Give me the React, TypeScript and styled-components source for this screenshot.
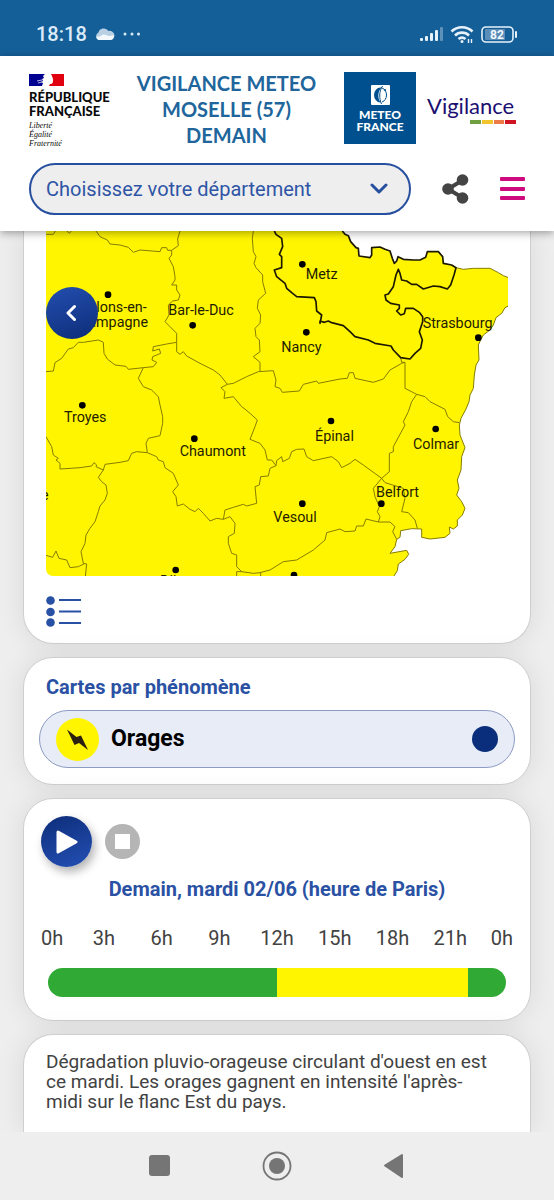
import React from "react";
import styled, { createGlobalStyle, css } from "styled-components";

const GlobalStyle = createGlobalStyle`
  * { box-sizing: border-box; }
  body { margin: 0; background: #eeeeee; font-family: Roboto, "Liberation Sans", sans-serif; font-size: 20px; color: #424242; }
  button { padding: 0; border: 0; background: none; font: inherit; cursor: pointer; }
  svg { display: block; }
`;

const Page = styled.div`
  min-height: 100vh;
  display: flex;
  flex-direction: column;
`;

/* ---------- status bar ---------- */

const StatusBar = styled.div`
  display: flex;
  align-items: center;
  gap: 8px;
  height: 56px;
  padding: 12px 36px 0;
  background: #155f98;
  color: #dcebf8;
`;

const Clock = styled.time`
  font-size: 20px;
  line-height: 24px;
  font-weight: 500;
`;

const StatusRight = styled.div`
  display: flex;
  align-items: center;
  gap: 6px;
  margin-left: auto;
`;

/* ---------- header ---------- */

const Header = styled.header`
  position: relative;
  z-index: 2;
  padding: 14px 29px 16px;
  background: #ffffff;
  box-shadow: 0 2px 8px rgba(0, 0, 0, 0.35);
`;

const Brand = styled.div`
  display: flex;
  height: 93px;
`;

const Republic = styled.div`
  width: 80px;
  padding-top: 4px;
  color: #0a0a0a;
`;

const RepublicName = styled.div`
  margin-top: 4px;
  font: 900 13px/14px Lato, sans-serif;
  white-space: nowrap;
`;

const Motto = styled.div`
  margin-top: 3px;
  font: italic 8px/9px "Liberation Serif", serif;
`;

const Title = styled.h1`
  flex: 1;
  margin: 0;
  text-align: center;
  white-space: pre-line;
  font: 700 20px/26px Lato, sans-serif;
  color: #20659b;
`;

const MeteoFrance = styled.div`
  display: flex;
  flex-direction: column;
  align-items: center;
  width: 72px;
  height: 72px;
  margin-top: 2px;
  padding-top: 13px;
  background: #00508f;
  color: #ffffff;
  text-align: center;
  font: 900 12px/12px Lato, sans-serif;
`;

const MeteoName = styled.div`
  margin-top: 4px;
`;

const VigilanceLogo = styled.div`
  display: flex;
  flex-direction: column;
  width: 89px;
  margin: 22px 9px 0 11px;
  color: #1b0f70;
  font: 400 22px/28px Lato, sans-serif;
`;

const Levels = styled.div`
  display: flex;
  gap: 1px;
  width: 46px;
  margin-left: auto;
`;

const Level = styled.span<{ $color: string }>`
  flex: 1;
  height: 4px;
  background: ${(p) => p.$color};
`;

const Tools = styled.div`
  display: flex;
  align-items: center;
  gap: 31px;
`;

const SelectWrap = styled.div`
  position: relative;
  flex: 1;
  display: flex;
`;

const Department = styled.select`
  appearance: none;
  width: 100%;
  height: 52px;
  padding: 0 48px 0 15px;
  border: 2px solid #274f9f;
  border-radius: 26px;
  background: #eeeeee;
  color: #2f55a6;
  font: 400 20px/24px Roboto, sans-serif;
`;

const Chevron = styled.svg`
  position: absolute;
  right: 23px;
  top: 19px;
  pointer-events: none;
`;

/* ---------- cards ---------- */

const Main = styled.main`
  flex: 1;
  display: flex;
  flex-direction: column;
  gap: 13px;
  padding: 0 23px;
  overflow: hidden;
`;

type Place = "top" | "middle" | "bottom";

const Card = styled.section<{ $place?: Place; $pad: string }>`
  padding: ${(p) => p.$pad};
  border: 1px solid #cfcfcf;
  border-radius: 30px;
  background: #ffffff;
  box-shadow: 0 0 28px rgba(0, 0, 0, 0.09);
  ${(p) => p.$place === "top" && css`border-top: 0; border-top-left-radius: 0; border-top-right-radius: 0;`}
  ${(p) => p.$place === "bottom" && css`flex: 1; border-bottom: 0; border-bottom-left-radius: 0; border-bottom-right-radius: 0;`}
`;

const MapFrame = styled.div`
  position: relative;
  overflow: hidden;
  border-radius: 0 0 7px 7px;
`;

const MapSvg = styled.svg`
  width: 100%;
  height: auto;
  font-family: Roboto, sans-serif;
`;

const Previous = styled.button`
  position: absolute;
  left: 0;
  top: 56px;
  width: 52px;
  height: 52px;
  border-radius: 50%;
  background: linear-gradient(160deg, #234fb0, #0d2c78);
  display: grid;
  place-items: center;
`;

const LegendButton = styled.button`
  display: block;
  margin-top: 20px;
`;

const CardTitle = styled.h2<{ $center?: boolean }>`
  margin: ${(p) => (p.$center ? "10px 0 0" : "0 7px")};
  text-align: ${(p) => (p.$center ? "center" : "left")};
  font-size: 20px;
  line-height: 24px;
  font-weight: 700;
  color: #2a51a3;
`;

const Phenomenon = styled.label`
  display: flex;
  align-items: center;
  gap: 12px;
  height: 58px;
  margin-top: 11px;
  padding: 0 16px;
  border: 1px solid #8c9bc2;
  border-radius: 29px;
  background: #e7ecf7;
  color: #000000;
  font-size: 23px;
  line-height: 28px;
  font-weight: 700;
`;

const PhenomenonRadio = styled.input`
  appearance: none;
  width: 26px;
  height: 26px;
  margin: 0 0 0 auto;
  border-radius: 50%;
  background: #0b2e7c;
`;

const Controls = styled.div`
  display: flex;
  align-items: center;
  gap: 13px;
`;

const Play = styled.button`
  display: grid;
  place-items: center;
  width: 51px;
  height: 51px;
  border-radius: 50%;
  background: linear-gradient(160deg, #0e2d7a, #2350b4);
  box-shadow: 3px 5px 10px rgba(0, 0, 0, 0.3);
`;

const Stop = styled.button`
  display: grid;
  place-items: center;
  width: 35px;
  height: 35px;
  border-radius: 50%;
  background: #b5b5b5;
`;

const Hours = styled.div`
  display: flex;
  margin-top: 25px;
  font-size: 20px;
  line-height: 24px;
`;

const Hour = styled.span`
  flex: 1;
  text-align: center;
  &:first-child { flex: 0 0 34px; text-align: left; }
  &:last-child { flex: 0 0 34px; text-align: right; }
`;

const Timeline = styled.div`
  display: flex;
  height: 29px;
  margin: 18px 7px 0;
  border-radius: 15px;
  overflow: hidden;
`;

const Period = styled.span<{ $hours: number; $color: string }>`
  flex: ${(p) => p.$hours};
  background: ${(p) => p.$color};
`;

const Bulletin = styled.p`
  margin: 0;
  font-size: 19px;
  line-height: 20px;
`;

/* ---------- phone navigation ---------- */

const PhoneNav = styled.nav`
  position: relative;
  display: flex;
  justify-content: center;
  align-items: center;
  gap: 88px;
  height: 68px;
  background: #eeeeee;
`;

/* ---------- map data, three units per pixel ---------- */

const NORTH =
  "967,18 975,28 985,32 992,50 1008,68 1015,70 1017,93 1050,98 1055,90 1055,68 1080,66 1095,73 1110,78 1117,100 1123,115 1130,108 1134,95 1150,103 1180,105 1200,105 1217,97 1222,80 1255,80 1268,95 1270,115 1295,120 1308,128";

const EAST =
  "1308,128 1330,133 1360,130 1410,130 1435,143 1450,152 1465,158";

const RHINE =
  "1465,243 1455,248 1445,265 1428,278 1420,300 1410,315 1390,330 1382,345 1375,360 1377,405 1368,420 1363,450 1360,490 1350,510 1347,530 1338,552 1323,580 1318,600 1320,630 1335,668 1325,695 1323,735 1312,765 1317,790 1310,810 1325,830 1335,850 1327,870 1312,885 1312,903 1300,912 1288,906 1290,925 1275,937 1230,942 1205,937 1205,912 1175,911 1142,917 1140,937 1130,943 1125,965 1110,985 1160,976 1166,988 1155,1003 1135,1017 1132,1037 1120,1056";

const MOSELLE =
  NORTH +
  " 1302,150 1292,180 1282,192 1260,185 1240,183 1210,192 1190,178 1175,178 1160,168 1145,165 1140,145 1135,133 1128,150 1120,185 1105,207 1095,210 1098,225 1112,235 1138,240 1138,250 1130,258 1142,270 1153,266 1157,250 1180,250 1198,262 1208,275 1208,290 1198,320 1207,345 1202,370 1185,385 1170,402 1142,398 1120,375 1113,363 1065,355 1045,345 1005,335 990,320 970,302 935,293 925,288 913,292 900,288 900,295 905,270 890,258 888,230 883,218 830,215 815,203 800,190 795,175 770,155 763,135 785,128 785,95 778,88 788,65 785,40 768,28 763,18";

const BORDERS = [
  "78,28 100,28 106,18",
  "140,18 148,24 155,18",
  "228,18 240,35 262,45 270,57 300,60 325,67 340,82 360,75 420,80 425,68 440,68 443,76 455,76 475,62 473,42 480,18",
  "455,76 455,90 447,100 460,125 465,155 465,165 455,180 470,180 470,195 480,210 475,225 458,228 445,240 447,270 435,290 450,305 470,325 470,352",
  "470,352 440,357 400,365 398,378 418,372 422,385 398,395 396,405 410,412 400,425 370,428 325,433 318,424 285,420 262,402 252,385 250,352 235,345 190,352 175,352 160,368 145,372 125,400 105,413 100,438 78,440",
  "470,352 470,380 480,388 490,380 500,393 540,415 580,435 600,450 622,478",
  "370,428 355,460 370,485 395,495 415,515 420,540 428,575 428,595 420,632 385,640 378,655 382,683",
  "78,635 95,665 100,690 115,700 108,705 120,715 120,732 180,728 215,723 222,713 230,720 228,725 250,735",
  "250,735 255,718 300,712 325,707 335,685 350,680 382,683 410,695 415,705 430,710 435,728 460,745 475,780 458,800 468,815 472,843 490,837 510,853 525,860 535,850 550,865 570,888 590,880 610,883",
  "250,735 235,757 245,770 258,780 262,805 255,825 240,843 235,860 225,890 210,910 198,930 195,955 183,980 190,1015 200,1017 196,1056",
  "78,991 98,997 108,978 117,1000 140,1005 150,1028 175,1025 195,1015",
  "610,883 615,855 640,847 670,838 680,843 710,835 705,785 718,780 722,755 745,753 750,730 768,722",
  "610,883 630,875 645,895 643,925 625,935 625,955 635,985 650,990 650,1025 665,1040 700,1045 720,1043 750,1035 790,1010 830,1005 880,975 915,945 920,923 960,912 975,920 1005,918 1010,903 1030,903 1038,882 1075,891",
  "650,1056 650,1040 665,1040",
  "722,1056 722,1043",
  "700,18 697,40 700,80 708,95 702,115 708,128 728,150 728,170 737,205 715,225 712,250 722,270 720,295 705,310 708,335 718,345 720,380 700,395 720,412 720,438",
  "622,478 640,475 680,455 715,440 760,437 768,465 765,485 780,490 787,502 838,498 850,478 890,468 895,475 960,462 982,460 988,443 1000,443 1005,460 1060,472 1090,462 1110,435 1145,415 1155,412",
  "1142,398 1145,412 1155,412 1155,490 1190,508 1215,515 1230,530 1275,553 1283,575 1300,590 1318,593",
  "1190,508 1175,530 1165,560 1150,590 1155,600 1120,665 1120,680 1108,685 1108,740 1085,760",
  "768,722 770,707 785,695 788,710 808,700 815,680 830,673 852,672 860,695 880,707 935,695 955,710 965,728 990,715 1005,703 1030,720 1085,760",
  "1085,760 1060,790 1065,815 1078,845 1072,860 1080,875 1075,891",
  "1085,760 1095,773 1150,790 1155,820 1145,860 1165,863 1185,885 1192,910",
  "1075,891 1110,891 1125,905 1118,920 1130,943",
  "622,478 603,488 615,500 612,520 640,515 665,545 672,550 690,565 712,585 705,605 690,643 720,655 735,675 742,705 755,705 768,722",
];

type City = { name: string; x: number; y: number; end?: boolean };

const CITIES: City[] = [
  { name: "Châlons-en-", x: 380, y: 260, end: true },
  { name: "Champagne", x: 384, y: 305, end: true },
  { name: "Bar-le-Duc", x: 445, y: 270 },
  { name: "Metz", x: 857, y: 163 },
  { name: "Nancy", x: 784, y: 380 },
  { name: "Strasbourg", x: 1208, y: 308 },
  { name: "Troyes", x: 132, y: 591 },
  { name: "Chaumont", x: 479, y: 694 },
  { name: "Épinal", x: 885, y: 647 },
  { name: "Colmar", x: 1179, y: 672 },
  { name: "Vesoul", x: 760, y: 891 },
  { name: "Belfort", x: 1068, y: 815 },
  { name: "Auxerre", x: 86, y: 824, end: true },
  { name: "Dijon", x: 420, y: 1083 },
];

const DOTS = [
  [264, 209], [518, 301], [847, 118], [859, 322], [1375, 338], [187, 541], [523, 641],
  [933, 588], [1247, 612], [847, 836], [1084, 836], [467, 1035], [822, 1050],
];

const HOURS = ["0h", "3h", "6h", "9h", "12h", "15h", "18h", "21h", "0h"];

const GREEN = "#31aa35";
const YELLOW = "#fff500";

function WeatherMap() {
  return (
    <MapSvg viewBox="78 18 1386 1035" role="img" aria-label="Carte de vigilance">
      <polygon points={`78,18 ${NORTH} ${EAST} ${RHINE} 78,1056`} fill={YELLOW} />
      <g fill="none" stroke="#857d00" strokeWidth="3" strokeLinejoin="round">
        {BORDERS.map((points) => (
          <polyline key={points} points={points} />
        ))}
        <polyline points={EAST} />
        <polyline points={RHINE} />
      </g>
      <polyline points={MOSELLE} fill="none" stroke="#1c1900" strokeWidth="5" strokeLinejoin="round" />
      {DOTS.map(([x, y]) => (
        <circle key={`${x}-${y}`} cx={x} cy={y} r="10" fill="#000000" />
      ))}
      <g fontSize="43" fill="#1f1c00">
        {CITIES.map((c) => (
          <text key={c.name} x={c.x} y={c.y} textAnchor={c.end ? "end" : "start"}>
            {c.name}
          </text>
        ))}
      </g>
    </MapSvg>
  );
}

export default function App() {
  return (
    <Page>
      <GlobalStyle />
      <StatusBar>
        <Clock>18:18</Clock>
        <svg width="20" height="14" viewBox="0 0 20 14" aria-hidden="true">
          <path d="M4 13a4 4 0 0 1-.6-7.400A5.600 5.600 0 0 1 13.500 4 4.500 4.500 0 0 1 16 13z" fill="#b9d0e4" />
          <path d="M1 9.500c4 1.500 5-2 8-2s4 3 9.500.5A3.500 3.500 0 0 1 15.500 13H4A4 4 0 0 1 1 9.500z" fill="#f4f9fd" />
        </svg>
        <svg width="18" height="4" viewBox="0 0 18 4" fill="#dcebf8" aria-hidden="true">
          <circle cx="2" cy="2" r="1.500" />
          <circle cx="9" cy="2" r="1.500" />
          <circle cx="15.500" cy="2" r="1.500" />
        </svg>
        <StatusRight>
          <svg width="24" height="16" viewBox="0 0 24 16" fill="#e6f1fa" aria-hidden="true">
            <rect x="0" y="12" width="3" height="3" rx="1" />
            <rect x="5" y="10" width="3" height="5" rx="1" />
            <rect x="10" y="7" width="3" height="8" rx="1" />
            <rect x="15" y="4" width="3" height="11" rx="1" />
            <rect x="20" y="1" width="3" height="14" rx="1" opacity=".35" />
          </svg>
          <svg width="25" height="19" viewBox="0 0 25 19" fill="none" stroke="#e6f1fa" strokeWidth="2.600" aria-hidden="true">
            <path d="M1.500 6.500a15 15 0 0 1 21 0M5 10.500a10 10 0 0 1 14 0M8.500 14a5.500 5.500 0 0 1 7 0" />
            <circle cx="12" cy="16.500" r="1.500" fill="#e6f1fa" stroke="none" />
            <path d="M18.500 18v-4M21.500 14v4" strokeWidth="1.400" />
          </svg>
          <svg width="37" height="17" viewBox="0 0 37 17" aria-label="82%">
            <rect x="1" y="1" width="31" height="15" rx="4" fill="none" stroke="#e6f1fa" strokeWidth="1.600" />
            <rect x="4" y="3" width="20" height="11" rx="1" fill="#5b8db8" />
            <path d="M35 6v5" stroke="#e6f1fa" strokeWidth="2" strokeLinecap="round" />
            <text x="16" y="13" textAnchor="middle" fontSize="12" fontWeight="700" fill="#f2f8fd">82</text>
          </svg>
        </StatusRight>
      </StatusBar>

      <Header>
        <Brand>
          <Republic>
            <svg width="35" height="12" viewBox="0 0 35 12" aria-hidden="true">
              <path d="M0 0h16l-2 2 1 2-2 1 1 2-2 1 2 1-1 3H0z" fill="#000091" />
              <path d="M22 0h13v12H20l1-2c3 0 3-2 3-4s-1-4-2-6z" fill="#e1000f" />
              <path d="M8 7l5-1M9 9l4-1" stroke="#fff" strokeWidth=".7" />
            </svg>
            <RepublicName>
              RÉPUBLIQUE
              <br />
              FRANÇAISE
            </RepublicName>
            <Motto>
              Liberté
              <br />
              Égalité
              <br />
              Fraternité
            </Motto>
          </Republic>
          <Title>{"VIGILANCE METEO\nMOSELLE (57)\nDEMAIN"}</Title>
          <MeteoFrance>
            <svg width="19" height="20" viewBox="0 0 19 20" aria-hidden="true">
              <rect width="19" height="20" rx="1" fill="#fff" />
              <path d="M9.500 2.500a6.500 7.500 0 0 0 0 15c-3-4-3-11 1-15z" fill="#00508f" />
              <path d="M11.500 1C8 6 8 14 10.500 19M11 3c6 2 6 12 0 14" fill="none" stroke="#00508f" />
              <circle cx="14" cy="5" r="1" fill="#00508f" />
            </svg>
            <MeteoName>
              METEO
              <br />
              FRANCE
            </MeteoName>
          </MeteoFrance>
          <VigilanceLogo>
            Vigilance
            <Levels>
              <Level $color="#6fa042" />
              <Level $color="#f3c52c" />
              <Level $color="#ec7b48" />
              <Level $color="#cf1424" />
            </Levels>
          </VigilanceLogo>
        </Brand>
        <Tools>
          <SelectWrap>
            <Department aria-label="Département" defaultValue="">
              <option value="">Choisissez votre département</option>
            </Department>
            <Chevron width="18" height="13" viewBox="0 0 18 13" aria-hidden="true">
              <path d="M2 3l7 7 7-7" fill="none" stroke="#274f9f" strokeWidth="3" strokeLinecap="round" strokeLinejoin="round" />
            </Chevron>
          </SelectWrap>
          <button type="button" aria-label="Partager">
            <svg width="27" height="30" viewBox="0 0 27 30" fill="#444444">
              <path d="M21 6L6 15l15 9" fill="none" stroke="#444444" strokeWidth="4" />
              <circle cx="20.500" cy="6" r="5.800" />
              <circle cx="6" cy="15" r="5.800" />
              <circle cx="20.500" cy="24" r="5.800" />
            </svg>
          </button>
          <button type="button" aria-label="Menu">
            <svg width="25" height="24" viewBox="0 0 25 24" fill="#cf0a7f">
              <rect y="0" width="25" height="4" rx="1" />
              <rect y="10" width="25" height="4" rx="1" />
              <rect y="19" width="25" height="4" rx="1" />
            </svg>
          </button>
        </Tools>
      </Header>

      <Main>
        <Card $place="top" $pad="0 22px 16px">
          <MapFrame>
            <WeatherMap />
            <Previous type="button" aria-label="Précédent">
              <svg width="12" height="18" viewBox="0 0 12 18" aria-hidden="true">
                <path d="M8.500 2.500L2 9l6.500 6.500" fill="none" stroke="#fff" strokeWidth="3" strokeLinecap="round" strokeLinejoin="round" />
              </svg>
            </Previous>
          </MapFrame>
          <LegendButton type="button" aria-label="Légende">
            <svg width="35" height="31" viewBox="0 0 35 31" fill="#2851a5">
              <circle cx="4.500" cy="4.500" r="4.300" />
              <circle cx="4.500" cy="16" r="4.300" />
              <circle cx="4.500" cy="26.500" r="4.300" />
              <path d="M13 3h22v2H13zM13 14.500h22v2H13zM13 26h22v2H13z" />
            </svg>
          </LegendButton>
        </Card>

        <Card $pad="17px 15px 16px">
          <CardTitle>Cartes par phénomène</CardTitle>
          <Phenomenon>
            <svg width="43" height="43" viewBox="0 0 43 43" aria-hidden="true">
              <circle cx="21.500" cy="21.500" r="21.500" fill={YELLOW} />
              <path d="M11 11.500l9.500 7.500 4.500-1.500 7 14.500-9-7-4.500 2z" fill="#2b2010" />
            </svg>
            Orages
            <PhenomenonRadio type="radio" name="phenomenon" defaultChecked />
          </Phenomenon>
        </Card>

        <Card $pad="17px 17px 23px">
          <Controls>
            <Play type="button" aria-label="Lecture">
              <svg width="22" height="24" viewBox="0 0 22 24" aria-hidden="true">
                <path d="M2 2l18 10L2 22z" fill="#fff" stroke="#fff" strokeWidth="3" strokeLinejoin="round" />
              </svg>
            </Play>
            <Stop type="button" aria-label="Arrêt">
              <svg width="15" height="15" viewBox="0 0 15 15" aria-hidden="true">
                <rect width="15" height="15" fill="#fff" />
              </svg>
            </Stop>
          </Controls>
          <CardTitle $center>Demain, mardi 02/06 (heure de Paris)</CardTitle>
          <Hours>
            {HOURS.map((h, i) => (
              <Hour key={i}>{h}</Hour>
            ))}
          </Hours>
          <Timeline>
            <Period $hours={12} $color={GREEN} />
            <Period $hours={10} $color={YELLOW} />
            <Period $hours={2} $color={GREEN} />
          </Timeline>
        </Card>

        <Card $place="bottom" $pad="17px 22px 20px">
          <Bulletin>
            Dégradation pluvio-orageuse circulant d'ouest en est
            <br />
            ce mardi. Les orages gagnent en intensité l'après-
            <wbr />
            <br />
            midi sur le flanc Est du pays.
          </Bulletin>
        </Card>
      </Main>

      <PhoneNav>
        <button type="button" aria-label="Applications récentes">
          <svg width="30" height="30" viewBox="0 0 30 30">
            <rect x="5" y="4" width="21" height="21" rx="3" fill="#757575" />
          </svg>
        </button>
        <button type="button" aria-label="Accueil">
          <svg width="30" height="30" viewBox="0 0 30 30" fill="#757575">
            <circle cx="15" cy="15" r="13.500" fill="none" stroke="#757575" strokeWidth="1.800" />
            <circle cx="15" cy="15" r="8" />
          </svg>
        </button>
        <button type="button" aria-label="Retour">
          <svg width="30" height="30" viewBox="0 0 30 30">
            <path d="M5 14.500L22 4v22z" fill="#757575" stroke="#757575" strokeWidth="2" strokeLinejoin="round" />
          </svg>
        </button>
      </PhoneNav>
    </Page>
  );
}
